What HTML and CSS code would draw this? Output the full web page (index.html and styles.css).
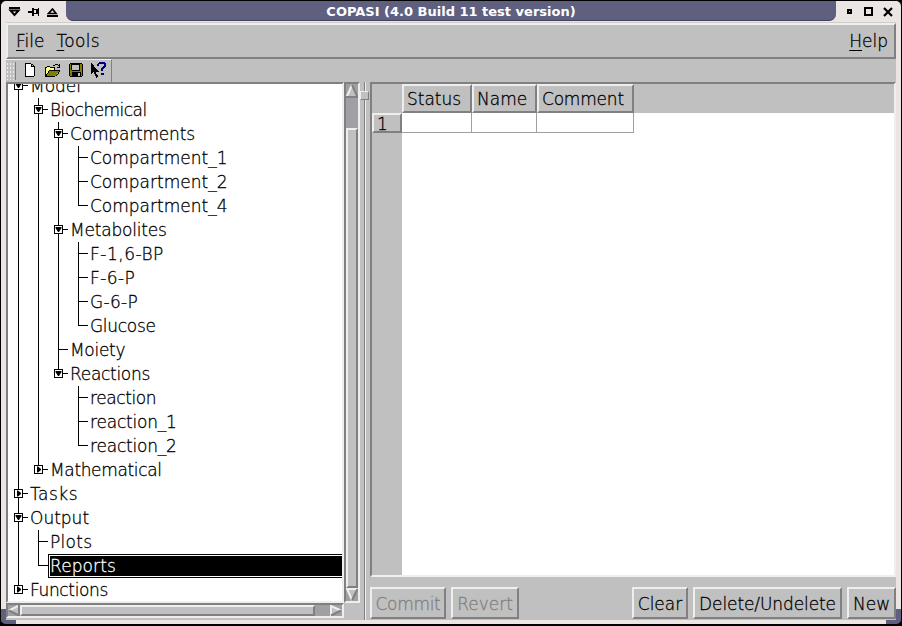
FILE: index.html
```html
<!DOCTYPE html>
<html lang="en"><head><meta charset="utf-8"><title>COPASI</title><link rel="stylesheet" href="styles.css"></head>
<body><div class="window">
<header class="titlebar">
<div class="wm-left"><svg width="46" height="16" viewBox="0 0 46 16" shape-rendering="crispEdges"><path d="M0 3h11v2H0z"/><path d="M1.500 6.500h8L5.500 11z" fill="none" stroke="#000" stroke-width="2" shape-rendering="auto"/><path d="M19 8h5M24 4v8M24 5.500h4v4h-4M29.500 4v8" fill="none" stroke="#000" stroke-width="1.500"/><path d="M38 11h11v2H38z"/><path d="M39.500 9.500h7.500L43.500 5z" fill="none" stroke="#000" stroke-width="1.700" shape-rendering="auto"/></svg></div>
<div class="title"><span>COPASI (4.0 Build 11 test version)</span></div>
<div class="wm-right"><svg width="44" height="16" viewBox="0 0 44 16"><path d="M1 6h3v3H1z" fill="none" stroke="#000" stroke-width="2"/><path d="M18 4h7v7h-7z" fill="none" stroke="#000" stroke-width="2"/><path d="M37 4l8 8M45 4l-8 8" stroke="#000" stroke-width="2.200"/></svg></div>
</header>
<div class="client">
<nav class="menubar"><span class="m-file"><u>F</u>ile</span><span class="m-tools"><u>T</u>ools</span><span class="m-help"><u>H</u>elp</span></nav>
<div class="toolrow"><div class="toolbar"><div class="grip"></div>
<svg width="92" height="20" viewBox="20 61 92 20" shape-rendering="crispEdges"><path d="M24.500 63.500h6l3 3v10h-9zM30.500 63.500v3h3" fill="#fff" stroke="#000"/><path d="M44.500 76V67.500h1l1-1h3l1 1h4v3" fill="#ffff80" stroke="#000"/><path d="M44.500 76.500l4-6h11l-4.500 6z" fill="#808000" stroke="#000"/><path d="M53 65.500l2-1h2l2 2M59.500 64v3h-3" fill="none" stroke="#000"/><path d="M69.500 63.500h13v13h-12l-1-1z" fill="#808000" stroke="#000"/><path d="M72 64h8v6h-8z" fill="#c0c0c0" stroke="#000"/><path d="M72 72h9v4h-9z"/><path d="M78 73h2v3h-2z" fill="#c0c0c0"/><path d="M91 62v13l3-3 3 6 2-1-3-5h4z"/><path d="M99 66v-2l1.500-1.500h4l1.500 1.500v2l-3 3v2.500M102 74h2.500" fill="none" stroke="#000080" stroke-width="2"/></svg></div></div>
<main class="content">
<section class="left"><div class="tree-view"><ul class="tree" id="tree"></ul></div>
<div class="vscroll"><svg width="12" height="14"><path d="M0 13L6 0l6 13z" fill="#c0c0c0"/><path d="M.5 13L6 1" stroke="#eee" stroke-width="2"/><path d="M6 1l5.500 12H0" fill="none" stroke="#808080" stroke-width="2"/></svg><div class="trough"></div><div class="vthumb"></div><svg width="12" height="13"><path d="M0 1h12L6 13z" fill="#c0c0c0"/><path d="M12 1H1l5 11" fill="none" stroke="#eee" stroke-width="2"/><path d="M6 12l5.500-11" stroke="#808080" stroke-width="2"/></svg></div>
<div class="hscroll"><svg width="12" height="11"><path d="M12 0L0 5.500 12 11z" fill="#c0c0c0"/><path d="M12 0L1 5.500" stroke="#eee" stroke-width="2"/><path d="M1 5.500L11 10.500V0" fill="none" stroke="#808080" stroke-width="2"/></svg><div class="hthumb"></div><div class="htrough"></div><svg width="12" height="11"><path d="M0 0l12 5.500L0 11z" fill="#c0c0c0"/><path d="M1 11V1l10 4.500" fill="none" stroke="#eee" stroke-width="2"/><path d="M11 5.500L1 10.500" stroke="#808080" stroke-width="2"/></svg></div>
</section>
<div class="splitter"><div class="handle"></div></div>
<section class="right"><div class="table">
<div class="thead"><div class="corner"></div><div class="th c1"><span>Status</span></div><div class="th c2"><span>Name</span></div><div class="th c3"><span>Comment</span></div></div>
<div class="tbody"><div class="rows"><div class="rowhead">1</div></div><div class="cells"><div class="td c1"></div><div class="td c2"></div><div class="td c3"></div></div></div>
</div>
<div class="buttons"><button class="b1" disabled>Commit</button><button class="b2" disabled>Revert</button><i></i><button class="b3">Clear</button><button class="b4">Delete/Undelete</button><button class="b5">New</button></div>
</section></main></div></div>
<script src="tree.js"></script></body></html>
```
FILE: styles.css
```css
*{box-sizing:border-box}
body{margin:0;background:#000;font:17px "DejaVu Sans",sans-serif;font-weight:200;-webkit-text-stroke:.3px;color:#000;overflow:hidden}
.window{width:902px;height:626px;border:1px solid #000;border-bottom-width:2px;border-radius:6px;background:linear-gradient(#5f5f80,#5f5f80) 0 100%/15px 15px no-repeat,linear-gradient(#5f5f80,#5f5f80) 100% 100%/15px 15px no-repeat,#ebe6e4;display:flex;flex-direction:column;overflow:hidden;padding:0 5px 4px 5px}
.titlebar{height:21px;flex:none;display:flex;margin:0 -5px}
.wm-left{width:65px;padding:3px 0 0 8px}.wm-left svg,.wm-right svg{overflow:visible;display:block}
.title{width:770px;height:20px;background:#5f5f80;border-bottom:1px solid #404060;border-radius:0 0 7px 7px;color:#fff;font:bold 13px/22px "DejaVu Sans",sans-serif;-webkit-text-stroke:0;text-align:center}
.wm-right{padding:3px 0 0 11px}
.client{background:#c0c0c0;flex:1;min-height:0;display:flex;flex-direction:column;border-top:1px solid #d0cccb}
.menubar{height:36px;flex:none;border:2px solid;border-color:#eee #808080 #808080 #eee;display:flex;line-height:33px;padding:0 6px 0 8px}
.m-tools{margin-left:12px;letter-spacing:.3px}.m-help{margin-left:auto}u{text-decoration-thickness:1px;text-underline-offset:3px}
.toolrow{height:23px;flex:none}
.toolbar{width:106px;height:23px;border-right:1px solid #808080;border-top:1px solid #eee;display:flex;align-items:center}
.grip{width:10px;height:18px;margin-right:5px;border-right:1px solid #808080;background:radial-gradient(circle,#eee 1px,transparent 1px) 0 0/3px 4px}
.content{flex:1;display:flex;min-height:0}
.left{width:354px;display:grid;grid-template-columns:338px 16px;grid-template-rows:521px 1fr}
.tree-view{border:2px solid;border-color:#808080 #eee #eee #808080;background:#fff;overflow:hidden}
ul{list-style:none;margin:0;padding:0 0 0 20px}
.tree{padding:0;margin-top:-10px}
li{position:relative}
.row{height:24px;padding-left:22px;display:flex;position:relative;line-height:24px;white-space:nowrap}
.row::before{content:"";position:absolute;left:10px;top:11px;width:10px;height:1px;background:#000}
li::after{content:"";position:absolute;left:10px;top:0;height:100%;width:1px;background:#000}
li:last-child::after{height:12px}
.box{position:absolute;z-index:1;left:6px;top:7px;width:9px;height:9px;background:#fff;border:1px solid #000}
.box svg{display:block}
.row.sel{padding-left:20px}
.sel .label{background:#000;color:#fff;flex:1;padding-left:2px;box-shadow:inset 0 1px #000,inset 0 -1px #000,inset 1px 0 #000,inset 0 2px #fff,inset 0 -2px #fff,inset 2px 0 #fff}
.vscroll{border:2px solid;border-color:#808080 #eee #eee #808080;background:#a0a0a4;display:flex;flex-direction:column}
.vscroll svg,.hscroll svg{display:block;flex:none}
.trough{height:30px}.vthumb{flex:1;border:2px solid;border-color:#eee #808080 #808080 #eee;background:#c0c0c0}
.hscroll{grid-column:1;height:15px;border:2px solid;border-color:#808080 #eee #eee #808080;background:#a0a0a4;display:flex}
.hthumb{flex:1;border:2px solid;border-color:#eee #808080 #808080 #eee;background:#c0c0c0}.htrough{width:15px}
.splitter{width:10px;padding-top:9px;background:linear-gradient(90deg,transparent 4px,#808080 4px 5px,#eee 5px 6px,transparent 6px)}
.handle{width:9px;height:9px;background:#c0c0c0;border:1px solid;border-color:#eee #808080 #808080 #eee}
.right{flex:1;display:flex;flex-direction:column}
.table{height:495px;border:2px solid;border-color:#808080 #eee #eee #808080;background:#fff;display:flex;flex-direction:column}
.thead{height:29px;display:flex;background:#c0c0c0}.corner{width:30px}
.th{border:2px solid;border-color:#eee #808080 #808080 #eee;line-height:26px;padding-left:3px}
.c1{width:70px}.c2{width:65px}.c3{width:97px}.th.c3{letter-spacing:-.2px}
.tbody{flex:1;display:flex}.rows{width:30px;background:#c0c0c0}
.rowhead{height:20px;line-height:18px;border:2px solid;border-color:#eee #808080 #808080 #eee;padding-left:3px}
.cells{display:flex}.td{height:20px;border:1px solid #a0a0a4;border-width:0 1px 1px 0}
.buttons{display:flex;padding-top:10px}.buttons i{flex:1}
button{font:inherit;color:inherit;height:32px;background:#c0c0c0;border:2px solid;border-color:#eee #808080 #808080 #eee;padding:2px 0 0;margin-right:5px;white-space:nowrap}
button:disabled{color:#808080}.b1{width:76px;letter-spacing:-.3px}.b2{width:68px}.b3{width:56px}.b4{width:149px;letter-spacing:-.1px}.b5{width:49px;margin-right:0}
```
FILE: tree.js
```js
const data=[["Model",[["Biochemical",[["Compartments",[["Compartment_1"],["Compartment_2"],["Compartment_4"]]],["Metabolites",[["F-1,6-BP"],["F-6-P"],["G-6-P"],["Glucose"]]],["Moiety"],["Reactions",[["reaction"],["reaction_1"],["reaction_2"]]]]],["Mathematical",[]]]],["Tasks",[]],["Output",[["Plots"],["Reports"]]],["Functions",[]]];
const spacing={Biochemical:-.55,Compartments:-.18,Metabolites:-.2,"F-1,6-BP":.5,"F-6-P":.4,"G-6-P":.3,Glucose:-.3,Moiety:-.3,Reactions:-.3,reaction:-.4,reaction_1:-.2,reaction_2:-.2,Mathematical:-.35,Tasks:.5,Plots:.3,Reports:.1,Functions:-.35};
function render(items){return items.map(([name,kids])=>{
const box=kids?`<span class="box"><svg width="7" height="7"><path d="${kids.length?'M.5 1h6v1L4 6H3L.5 2z':'M2 .5h1L6 3v1L3 6.500H2z'}"/></svg></span>`:'';
return `<li><div class="row${name==='Reports'?' sel':''}">${box}<span class="label" style="letter-spacing:${spacing[name]||0}px">${name}</span></div>${kids&&kids.length?`<ul>${render(kids)}</ul>`:''}</li>`}).join('')}
document.getElementById('tree').innerHTML=render(data);
```
